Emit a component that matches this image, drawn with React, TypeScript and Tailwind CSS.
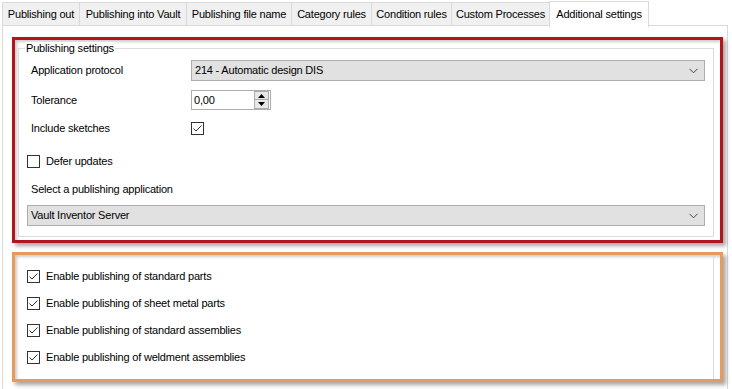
import React from "react";

const tabs = [
  { label: "Publishing out", w: 77 },
  { label: "Publishing into Vault", w: 107 },
  { label: "Publishing file name", w: 105 },
  { label: "Category rules", w: 80 },
  { label: "Condition rules", w: 80 },
  { label: "Custom Processes", w: 98 },
];

function Check({ checked }: { checked: boolean }) {
  return (
    <svg width="13" height="13" viewBox="0 0 13 13" className="shrink-0">
      <rect x="0.5" y="0.5" width="12" height="12" fill="#fff" stroke="#333" />
      {checked && (
        <path d="M2.5 6.5 L5 9 L10.5 3.5" fill="none" stroke="#333" strokeWidth="1" />
      )}
    </svg>
  );
}

function Chevron() {
  return (
    <svg width="9" height="6" viewBox="0 0 9 6" className="shrink-0">
      <path d="M0.5 0.8 L4.5 4.8 L8.5 0.8" fill="none" stroke="#444" strokeWidth="1" />
    </svg>
  );
}

function Dropdown({ text, className }: { text: string; className?: string }) {
  return (
    <div
      className={
        "h-[21px] bg-[#e1e1e1] border border-[#adadad] flex items-center pl-[3px] pr-[6px] " +
        (className ?? "")
      }
    >
      <span className="flex-1">{text}</span>
      <Chevron />
    </div>
  );
}

export default function App() {
  return (
    <div
      className="w-[732px] h-[389px] bg-white overflow-hidden text-[11px] leading-[13px] tracking-[-0.2px] text-black"
      style={{ fontFamily: '"Liberation Sans", Arial, sans-serif' }}
    >
      {/* tab strip */}
      <div className="h-[26px] flex items-end pl-[2px] relative z-10">
        {tabs.map((t) => (
          <div
            key={t.label}
            className="h-[24px] bg-[#f0f0f0] border border-[#d9d9d9] border-r-0 flex items-center justify-center"
            style={{ width: t.w }}
          >
            {t.label}
          </div>
        ))}
        <div className="h-[26px] w-[100px] bg-white border border-[#d9d9d9] border-b-0 flex items-start justify-center pt-[6px] -mb-px">
          Additional settings
        </div>
      </div>

      {/* tab panel */}
      <div className="ml-[2px] w-[726px] h-[370px] border-l border-r border-t border-[#d9d9d9] -mt-px pt-[11px] pl-[9px]">
        {/* red box */}
        <div className="w-[711px] border-[3px] border-[#b0141c] shadow-[3px_3px_4px_rgba(0,0,0,0.35),inset_2px_2px_3px_rgba(0,0,0,0.2)] pb-[3px] bg-white">
          <div className="relative ml-[3px] mr-[6px] mt-[8px] border border-[#dcdcdc] pt-[11px] pb-[10px] pl-[8px] pr-[8px]">
            <div className="absolute -top-[7px] left-[6px] bg-white px-[1px]">Publishing settings</div>
            <div className="flex items-center h-[21px]">
              <div className="w-[164px] pl-[4px]">Application protocol</div>
              <Dropdown text="214 - Automatic design DIS" className="flex-1" />
            </div>
            <div className="flex items-center h-[20px] mt-[9px]">
              <div className="w-[164px] pl-[4px]">Tolerance</div>
              <div className="w-[80px] h-[20px] border border-[#adadad] flex items-center bg-white">
                <span className="flex-1 pl-[2px]">0,00</span>
                <div className="w-[15px] h-[18px] flex flex-col mr-px">
                  <div className="h-[9px] bg-[#e8e8e8] border border-[#adadad] flex items-center justify-center">
                    <svg width="7" height="4" viewBox="0 0 7 4">
                      <path d="M0 4 L3.5 0 L7 4 Z" fill="#000" />
                    </svg>
                  </div>
                  <div className="h-[9px] bg-[#e8e8e8] border border-t-0 border-[#adadad] flex items-center justify-center">
                    <svg width="7" height="4" viewBox="0 0 7 4">
                      <path d="M0 0 L3.5 4 L7 0 Z" fill="#000" />
                    </svg>
                  </div>
                </div>
              </div>
            </div>
            <div className="flex items-center h-[13px] mt-[12px]">
              <div className="w-[164px] pl-[4px]">Include sketches</div>
              <Check checked />
            </div>
            <div className="flex items-center h-[13px] mt-[20px] gap-[6px]">
              <Check checked={false} />
              <span>Defer updates</span>
            </div>
            <div className="flex items-center h-[13px] mt-[15px] pl-[4px]">
              Select a publishing application
            </div>
            <Dropdown text="Vault Inventor Server" className="mt-[9px]" />
          </div>
        </div>

        {/* orange box */}
        <div className="w-[711px] h-[130px] mt-[9px] border-[3px] border-[#e89a5c] shadow-[3px_3px_4px_rgba(0,0,0,0.35),inset_2px_2px_3px_rgba(0,0,0,0.2)] bg-white">
          <div className="h-full mr-[6px] border-r border-[#dcdcdc] pt-[15px] pl-[12px] flex flex-col gap-[14px]">
            {[
              "Enable publishing of standard parts",
              "Enable publishing of sheet metal parts",
              "Enable publishing of standard assemblies",
              "Enable publishing of weldment assemblies",
            ].map((l) => (
              <div key={l} className="flex items-center h-[13px] gap-[6px]">
                <Check checked />
                <span>{l}</span>
              </div>
            ))}
          </div>
        </div>
      </div>
    </div>
  );
}
